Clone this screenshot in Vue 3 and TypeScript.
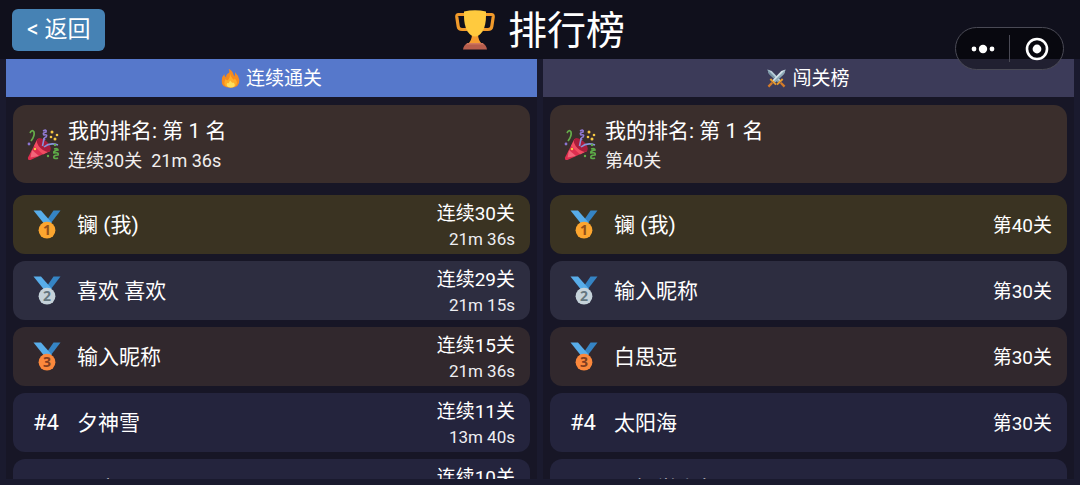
<script setup lang="ts">
interface Player {
  rank: number
  name: string
  stage: string
  time?: string
}
interface Board {
  key: string
  title: string
  active: boolean
  mine: string
  players: Player[]
}

const boards: Board[] = [
  {
    key: 'streak',
    title: '连续通关',
    active: true,
    mine: '连续30关  21m 36s',
    players: [
      { rank: 1, name: '镧 (我)', stage: '连续30关', time: '21m 36s' },
      { rank: 2, name: '喜欢 喜欢', stage: '连续29关', time: '21m 15s' },
      { rank: 3, name: '输入昵称', stage: '连续15关', time: '21m 36s' },
      { rank: 4, name: '夕神雪', stage: '连续11关', time: '13m 40s' },
      { rank: 5, name: '一立', stage: '连续10关', time: '12m 30s' },
    ],
  },
  {
    key: 'stage',
    title: '闯关榜',
    active: false,
    mine: '第40关',
    players: [
      { rank: 1, name: '镧 (我)', stage: '第40关' },
      { rank: 2, name: '输入昵称', stage: '第30关' },
      { rank: 3, name: '白思远', stage: '第30关' },
      { rank: 4, name: '太阳海', stage: '第30关' },
      { rank: 5, name: '一杨学少年', stage: '第30关' },
    ],
  },
]
</script>

<template>
  <div class="page">
    <header class="header">
      <button class="back" type="button">&lt; 返回</button>
      <h1 class="title">
        <svg class="trophy" viewBox="0 0 40 40" aria-hidden="true">
          <path d="M11 4.500H3.500Q1.500 4.500 1.800 7L3.200 16.500Q3.700 19.500 7 19.500H12M29 4.500H36.500Q38.500 4.500 38.200 7L36.800 16.500Q36.300 19.500 33 19.500H28" fill="none" stroke="#f19a2b" stroke-width="3.200" />
          <path d="M17 24H23Q23 30 27 34H13Q17 30 17 24Z" fill="#f59c2f" />
          <path d="M9 1.500Q20-.8 31 1.500Q31.500 15 27.500 21.500Q24 26.500 20 26.500Q16 26.500 12.500 21.500Q8.500 15 9 1.500Z" fill="#ffca3e" />
          <path d="M12.500 33H27.500Q31.500 35 32 39.500H8Q8.500 35 12.500 33Z" fill="#b75e4d" />
          <path d="M12.500 33H27.500L29 34.500H11Z" fill="#cf775f" />
        </svg>
        <span>排行榜</span>
      </h1>
    </header>

    <main class="boards">
      <section v-for="board in boards" :key="board.key" class="board">
        <h2 class="tab" :class="{ active: board.active }">
          <svg v-if="board.key === 'streak'" class="tab-icon" viewBox="0 0 20 20" aria-hidden="true">
            <path d="M8 0Q12 1.500 13 5.500L14 8Q15 7 14.800 3.500Q18.500 7 19.300 11.500Q20 19.500 10 19.500Q0 19.500 .8 12Q1 7.500 3.500 5.500Q3.500 8 5.500 9Q4.500 6 8.500 4Q9.500 2 8 0Z" fill="#f68b1f" />
            <path d="M9.500 5Q10 8 12.500 10.500Q14 12 14.500 10Q17.500 13 16.500 16Q15 19.500 10 19.500Q4.500 19.500 3.500 15.500Q3 13 5 10.500Q6 12.500 7.500 11.500Q10 9 9.500 5Z" fill="#ffad27" />
            <path d="M9.500 12Q13 16 13.500 14Q16.500 19.500 10 19.500Q4.500 19 6.500 14.500Q8 16.500 9.500 12Z" fill="#ffdf5b" />
          </svg>
          <svg v-else class="tab-icon" viewBox="0 0 20 20" aria-hidden="true">
            <path d="M.5 .5L5 2L15 12.500L12.500 15L2 5Z" fill="#b9ced8" />
            <path d="M.5 .5L13.500 13.500L12.500 15L2 5Z" fill="#7896a5" />
            <path d="M16.500 10.500L10.500 16.500" stroke="#e69a2e" stroke-width="2" />
            <path d="M14.500 14.500L18.500 18.500" stroke="#d57b29" stroke-width="2.400" />
            <g transform="matrix(-1 0 0 1 20 0)">
              <path d="M.5 .5L5 2L15 12.500L12.500 15L2 5Z" fill="#d3e3e9" />
              <path d="M.5 .5L13.500 13.500L12.500 15L2 5Z" fill="#8ba8b5" />
              <path d="M16.500 10.500L10.500 16.500" stroke="#e69a2e" stroke-width="2" />
              <path d="M14.500 14.500L18.500 18.500" stroke="#d57b29" stroke-width="2.400" />
            </g>
          </svg>
          <span>{{ board.title }}</span>
        </h2>

        <div class="content">
          <div class="mine">
            <svg class="party" viewBox="0 0 32 32" aria-hidden="true">
              <path d="M10.500 10L1 28.500Q.5 31.500 3.500 31L23 22Z" fill="#dd2e4f" />
              <path d="M10.500 10L7 17L16 25.500L23 22Z" fill="#f24c62" />
              <path d="M5 21L3.500 28.500L12 27Z" fill="#f3657a" />
              <ellipse cx="16.800" cy="16" rx="4.500" ry="8.800" transform="rotate(-46 16.800 16)" fill="#a91d3c" />
              <path d="M15.500 17Q17 10 17 9M17 18Q23 13 31 16" fill="none" stroke="#8795dc" stroke-width="1.600" />
              <path d="M16 2Q20 0 19 3Q15 4 17 6Q21 5 19 8Q16 9 18 11" fill="none" stroke="#8f79d2" stroke-width="1.700" />
              <path d="M3 4Q5 0 7 3Q8 7 4 12" fill="none" stroke="#65ad4a" stroke-width="1.700" />
              <path d="M27 20Q31 19 31 21Q26 22 27 24Q32 23 31 26Q26 26 27 29Q29 30 31 29" fill="none" stroke="#5dac48" stroke-width="1.700" />
              <g fill="#f7c843"><circle cx="25" cy="3" r="1.500" /><circle cx="30" cy="6" r="1.300" /><circle cx="24" cy="8" r="1.300" /><circle cx="28" cy="10" r="1.500" /><circle cx="8" cy="20" r="1.200" /></g>
              <circle cx="2" cy="15" r="1.400" fill="#8b75d1" />
              <g fill="#65ad4a"><circle cx="28" cy="16" r="1.200" /><circle cx="21" cy="27" r="1.200" /></g>
            </svg>
            <div>
              <p class="mine-rank">我的排名: 第 1 名</p>
              <p class="mine-score">{{ board.mine }}</p>
            </div>
          </div>

          <ol class="list">
            <li v-for="p in board.players" :key="p.rank" class="row" :class="'rank-' + p.rank">
              <svg v-if="p.rank <= 3" class="medal" viewBox="0 0 28 29" role="img" :aria-label="'#' + p.rank">
                <path d="M20.500 .5H27.500L18 13H12Z" fill="#3584c4" />
                <path d="M.5 .5H8L19 13H10.500Z" fill="#58ade9" />
                <circle class="disc" cx="14" cy="20.200" r="8.400" />
                <text class="digit" x="14" y="25" text-anchor="middle">{{ p.rank }}</text>
              </svg>
              <span v-else class="place">#{{ p.rank }}</span>
              <span class="name">{{ p.name }}</span>
              <span class="score">
                <span class="stage">{{ p.stage }}</span>
                <span v-if="p.time" class="time">{{ p.time }}</span>
              </span>
            </li>
          </ol>
        </div>
      </section>
    </main>

    <div class="capsule">
      <button type="button" aria-label="更多">
        <svg width="24" height="24" viewBox="0 0 24 24" fill="#fff" aria-hidden="true">
          <circle cx="3" cy="12" r="2.400" /><circle cx="12" cy="12" r="4.200" /><circle cx="21" cy="12" r="2.400" />
        </svg>
      </button>
      <button type="button" aria-label="关闭">
        <svg width="24" height="24" viewBox="0 0 24 24" aria-hidden="true">
          <circle cx="12" cy="12" r="10" fill="none" stroke="#fff" stroke-width="2.600" /><circle cx="12" cy="12" r="4.400" fill="#fff" />
        </svg>
      </button>
    </div>
  </div>
</template>

<style>
body {
  margin: 0;
  background: #1a1a2e;
}
</style>

<style scoped>
.page {
  box-sizing: border-box;
  height: 100vh;
  display: flex;
  flex-direction: column;
  overflow: hidden;
  background: #1a1a2e;
  color: #fff;
  font-family: Roboto, "Noto Sans CJK SC", sans-serif;
}
button {
  margin: 0;
  padding: 0;
  border: 0;
  background: none;
  color: inherit;
  font-family: inherit;
}
h1, h2, p, ol {
  margin: 0;
  padding: 0;
  font-weight: 400;
}
.header {
  flex: none;
  display: grid;
  grid-template-columns: 1fr auto 1fr;
  align-items: center;
  height: 59px;
  padding: 0 12px;
  background: #10101c;
}
.back {
  justify-self: start;
  height: 42px;
  padding: 0 15px;
  border-radius: 6px;
  background: #4682b4;
  font-size: 23px;
  line-height: 42px;
}
.title {
  display: flex;
  align-items: center;
  gap: 13px;
  font-size: 39px;
  line-height: 58px;
}
.title span {
  padding-top: 2px;
}
.trophy {
  width: 40px;
  height: 40px;
}
.boards {
  flex: 1;
  min-height: 0;
  display: grid;
  grid-template-columns: 1fr 1fr;
  gap: 6px;
  padding: 0 6px 6px;
}
.board {
  display: flex;
  flex-direction: column;
  min-height: 0;
  overflow: hidden;
  background: #171626;
}
.tab {
  flex: none;
  display: flex;
  align-items: center;
  justify-content: center;
  gap: 6px;
  height: 38px;
  background: #3c3b59;
  font-size: 19px;
  line-height: 38px;
}
.tab span {
  padding-top: 2px;
}
.tab.active {
  background: #5678cb;
}
.tab-icon {
  width: 19px;
  height: 19px;
}
.content {
  flex: 1;
  min-height: 0;
  padding: 8px 7px 0;
}
.mine {
  display: flex;
  align-items: center;
  gap: 9px;
  box-sizing: border-box;
  height: 78px;
  padding: 2px 14px 0;
  border-radius: 13px;
  background: #3a2e2c;
}
.party {
  width: 32px;
  height: 32px;
}
.mine-rank {
  font-size: 21px;
  line-height: 32px;
}
.mine-score {
  font-size: 18px;
  line-height: 28px;
  white-space: pre;
  color: #f2eeee;
}
.list {
  display: flex;
  flex-direction: column;
  gap: 7px;
  margin-top: 12px;
  list-style: none;
}
.row {
  display: flex;
  align-items: center;
  box-sizing: border-box;
  height: 59px;
  padding: 0 15px 0 20px;
  border-radius: 12px;
  background: #24243d;
}
.rank-1 { background: #3a3322; }
.rank-2 { background: #2d2d40; }
.rank-3 { background: #31282d; }
.medal {
  width: 28px;
  height: 29px;
  margin-right: 16px;
}
.rank-1 .disc { fill: #fca62f; }
.rank-2 .disc { fill: #c5d2d9; }
.rank-3 .disc { fill: #fb883c; }
.digit {
  font-family: "Open Sans", sans-serif;
  font-size: 14px;
  font-weight: 700;
}
.rank-1 .digit { fill: #935019; }
.rank-2 .digit { fill: #65777f; }
.rank-3 .digit { fill: #803d20; }
.place {
  width: 44px;
  font-size: 22px;
  line-height: 32px;
}
.name {
  flex: 1;
  font-size: 21px;
  line-height: 32px;
}
.score {
  display: flex;
  flex-direction: column;
  align-items: flex-end;
  padding-top: 2px;
}
.stage {
  font-size: 19px;
  line-height: 27px;
}
.time {
  font-size: 17px;
  line-height: 25px;
  color: #eeeef2;
}
.capsule {
  position: absolute;
  top: 27px;
  right: 16px;
  box-sizing: border-box;
  display: flex;
  width: 109px;
  height: 43px;
  padding: 7px 0;
  border: 1px solid #4a4a55;
  border-radius: 22px;
  background: rgba(0, 0, 0, 0.45);
}
.capsule button {
  flex: 1;
  display: flex;
  align-items: center;
  justify-content: center;
}
.capsule button + button {
  border-left: 1px solid #4a4a55;
}
</style>
